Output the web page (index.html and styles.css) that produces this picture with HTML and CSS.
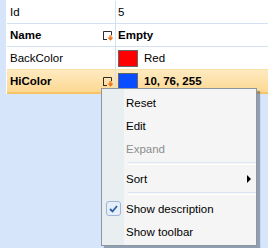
FILE: index.html
```html
<!DOCTYPE html>
<html lang="en">
<head>
    <meta charset="UTF-8">
    <title>Property grid</title>
    <link rel="stylesheet" href="styles.css">
</head>
<body>

<div class="grid">
    <div class="row">
        <div class="name">Id</div>
        <div class="value">5</div>
    </div>
    <div class="row bold">
        <div class="name">Name
            <svg class="pin" width="10" height="10" viewBox="0 0 10 10">
                <path d="M0.5 9V0.5H8.5V4M0.5 8.5H4" stroke="#2e2e2e" fill="none"/>
                <path d="M7 4V7M8 4V7" stroke="#ec7014"/>
                <path d="M4.5 6.5H10.5L7.5 9.8Z" fill="#ec7014"/>
            </svg>
        </div>
        <div class="value">Empty</div>
    </div>
    <div class="row">
        <div class="name">BackColor</div>
        <div class="value"><span class="swatch red"></span>Red</div>
    </div>
    <div class="row bold selected">
        <div class="name">HiColor
            <svg class="pin" width="10" height="10" viewBox="0 0 10 10">
                <path d="M0.5 9V0.5H8.5V4M0.5 8.5H4" stroke="#2e2e2e" fill="none"/>
                <path d="M7 4V7M8 4V7" stroke="#ec7014"/>
                <path d="M4.5 6.5H10.5L7.5 9.8Z" fill="#ec7014"/>
            </svg>
        </div>
        <div class="value"><span class="swatch blue"></span>10, 76, 255</div>
    </div>
</div>

<!-- context menu over the grid -->
<div class="menu">
    <div class="item">Reset</div>
    <div class="item">Edit</div>
    <div class="item disabled">Expand</div>
    <div class="sep"></div>
    <div class="item">Sort <span class="arrow"></span></div>
    <div class="sep"></div>
    <div class="item">
        <span class="check">
            <svg width="9" height="8" viewBox="0 0 9 8"><path d="M1 4L3.5 6.5L8 1" stroke="#2b5ea9" stroke-width="1.8" fill="none"/></svg>
        </span>
        Show description
    </div>
    <div class="item">Show toolbar</div>
</div>

</body>
</html>
```

FILE: styles.css
```css
body {
    margin: 0;
    background-color: #d6e5f9;
    font-family: "Liberation Sans", Arial, sans-serif;
    font-size: 11.5px;
    color: #000;
    height: 248px;
    overflow: hidden;
    position: relative;
}

.grid {
    margin-left: 6px;
    border-left: 1px solid #fff;
    background-color: #fff;
    padding-top: 1px;
}

.row {
    display: grid;
    grid-template-columns: 109px 1fr;
    height: 22px;
    border-bottom: 1px solid #d3e1f3;
}

.row.bold {
    font-weight: bold;
}

.row.selected {
    background: linear-gradient(#feeac0, #fdd892);
    border-top: 1px solid #fbe0a6;
    border-bottom: 2px solid #f6c464;
    margin-top: -1px;
}

.name {
    display: flex;
    align-items: center;
    justify-content: space-between;
    padding: 0 2px 0 3px;
    border-right: 1px solid #d3e1f3;
}

.pin {
    display: block;
    margin-top: 1px;
}

.value {
    display: flex;
    align-items: center;
    padding-left: 2px;
}

.swatch {
    width: 18px;
    height: 15px;
    border: 1px solid #666;
    margin-right: 6px;
}

.swatch.red {
    background-color: #ff0000;
}

.swatch.blue {
    background-color: #0a4cff;
}

.menu {
    position: absolute;
    left: 101px;
    top: 88px;
    width: 154px;
    padding: 2px 0 2px;
    border: 1px solid #8d96a1;
    background: linear-gradient(to right, #e9eef0 22px, #f5f5f5 22px);
    box-shadow: 3px 3px 1px rgba(60, 70, 90, 0.45);
}

.item {
    position: relative;
    display: flex;
    align-items: center;
    height: 23px;
    padding-left: 24px;
}

.item.disabled {
    color: #8d8d8d;
}

.sep {
    margin: 2px 0 2px 26px;
    height: 1px;
    border-top: 1px solid #dbe5f3;
    border-bottom: 1px solid #fff;
}

.arrow {
    position: absolute;
    right: 5px;
    top: 8px;
    width: 0;
    height: 0;
    border-left: 4px solid #000;
    border-top: 4px solid transparent;
    border-bottom: 4px solid transparent;
}

.check {
    position: absolute;
    left: 4px;
    top: 4px;
    width: 13px;
    height: 13px;
    border: 1px solid #9db6d8;
    border-radius: 3px;
    background-color: #e6eef9;
    display: flex;
    align-items: center;
    justify-content: center;
}
```
